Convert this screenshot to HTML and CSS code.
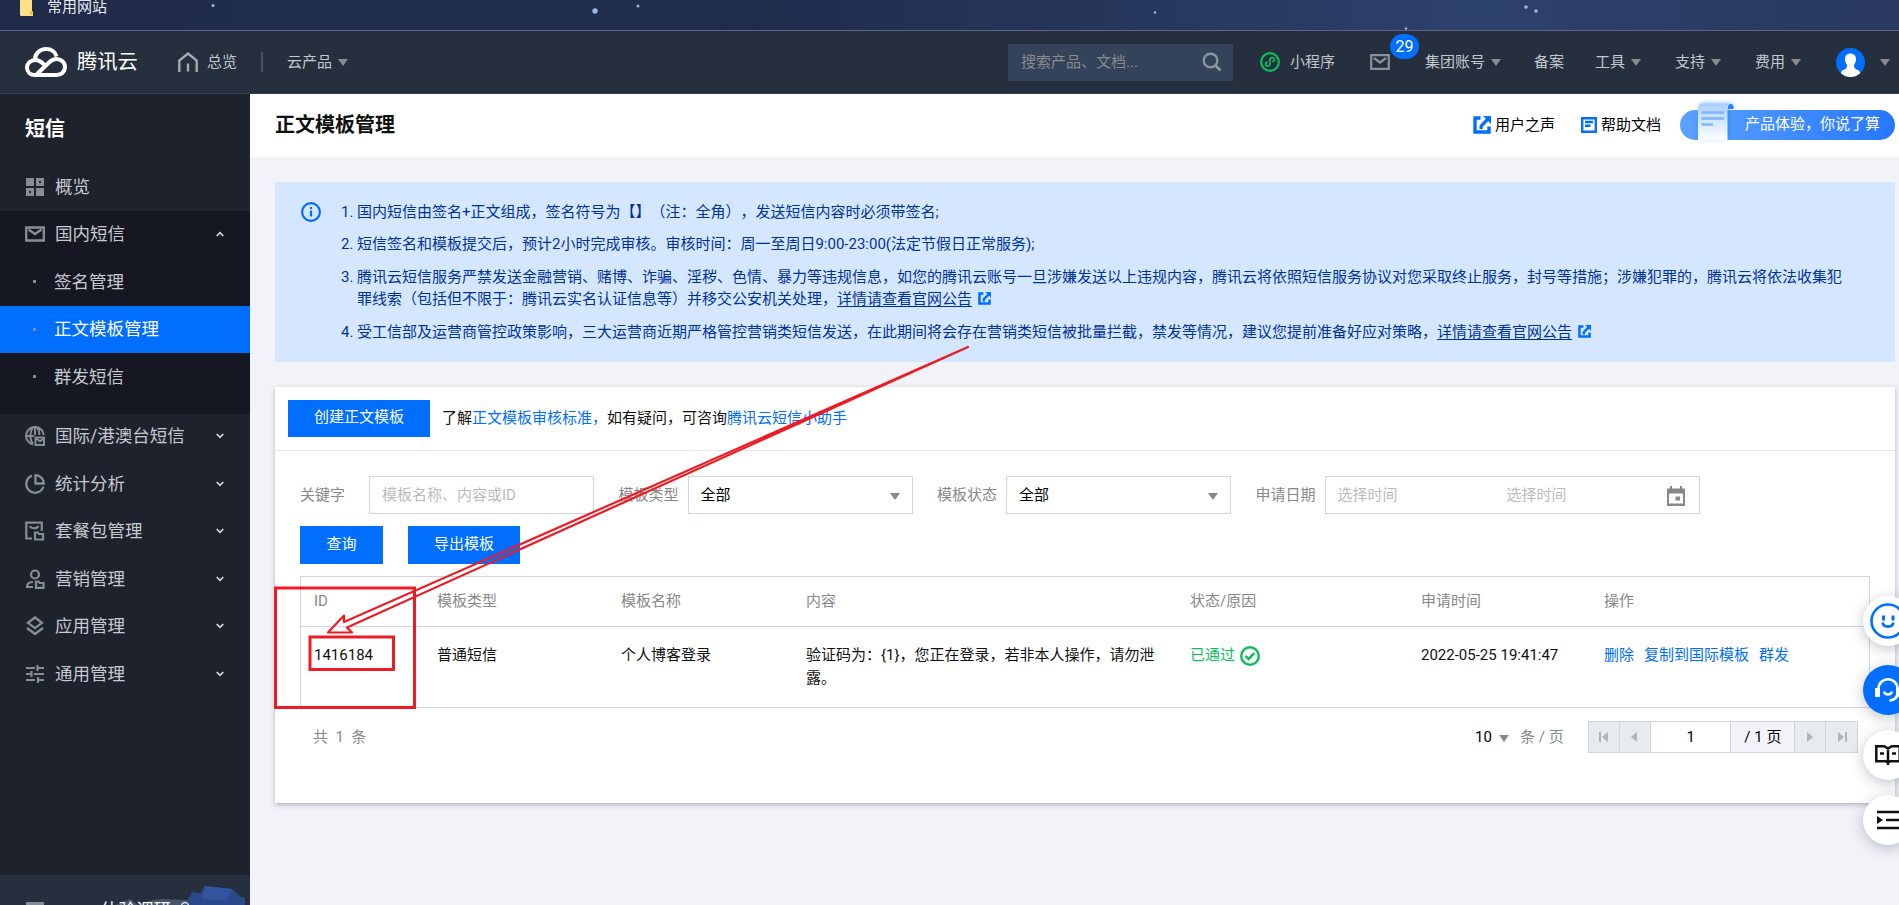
FILE: index.html
```html
<!DOCTYPE html>
<html lang="zh-CN">
<head>
<meta charset="utf-8">
<title>正文模板管理</title>
<link rel="stylesheet" href="styles.css">
</head>
<body>
<svg width="0" height="0" class="defs">
  <symbol id="share" viewBox="0 0 18 18"><path d="M7.500 2H2v14h14v-5.500" fill="none" stroke="currentColor" stroke-width="3.400"/><path d="M10 0h8v8l-2.800-2.800-5.500 5.500v2.300H6.500v-3.500l6.300-6.700z" fill="currentColor"/></symbol>
  <symbol id="down" viewBox="0 0 8 6"><path d="M.7 1 4 4.300 7.300 1" fill="none" stroke="#d5d8dc" stroke-width="1.700"/></symbol>
</svg>
<div class="bookmarks">
  <svg class="folder" width="14" height="18" viewBox="0 0 14 18"><path d="M0 0h12v12l1 1v4H1L0 16z" fill="#ffe08a"/><path d="M10 16v-4h2.500v4z" fill="#f0c33c"/></svg>
  <span>常用网站</span>
  <svg class="stars" width="1899" height="30"><g fill="#9db6e6"><circle cx="213" cy="5.500" r="1.500"/><circle cx="595" cy="11" r="2.700"/><circle cx="638" cy="6" r="1.500"/><circle cx="1155" cy="12.500" r="1.200"/><circle cx="1526" cy="7" r="1.800"/><circle cx="1536" cy="11" r="1.800"/><circle cx="1406" cy="28.500" r="1.300"/></g></svg>
</div>
<header class="top">
  <svg class="logo" width="42" height="30" viewBox="0 0 42 30"><g fill="none" stroke="#fff" stroke-width="4"><path d="M10 12.500C10 6.500 15 2 21 2c5.500 0 9.500 3 10.500 7.500"/><path d="M19 17.500c-3-3-5.500-4.500-8.500-4.500C5.500 13 2 16.500 2 20.500 2 25 5.500 28 10 28h21.500c5 0 8.500-3.500 8.500-8s-4-8-8.500-8c-3 0-5 1-7.500 3.500L12 27"/></g></svg>
  <span class="brand">腾讯云</span>
  <svg class="home" width="20" height="20" viewBox="0 0 20 20"><path d="M5.500 18.800H1.300V8.500L10 1.500l8.700 7v10.300h-4M10 11.500v8" fill="none" stroke="#a8adb5" stroke-width="2.300"/><path d="M2.500 17.500h5v2.500h-5zM12.500 17.500h5v2.500h-5z" fill="#262f3e"/></svg>
  <span class="nav n-home">总览</span><i class="bar"></i>
  <span class="nav n-prod">云产品</span><i class="tri"></i>
  <div class="search"><span>搜索产品、文档...</span><svg width="20" height="20" viewBox="0 0 20 20"><circle cx="8.500" cy="8.500" r="6.800" fill="none" stroke="#8b939e" stroke-width="2.400"/><path d="m13.500 13.500 5 5" stroke="#8b939e" stroke-width="2.800"/></svg></div>
  <svg class="mini" width="20" height="20" viewBox="0 0 20 20"><circle cx="10" cy="10" r="8.800" fill="none" stroke="#0abf5b" stroke-width="2.200"/><path d="M7.800 10.200c-3 .5-3 4-.3 4 3.700 0 2.500-3.500 2.500-4.500s-1-4 2.500-4c2.700 0 2.700 3.500-.3 4" fill="none" stroke="#0abf5b" stroke-width="1.700"/></svg>
  <span class="nav n-mini">小程序</span>
  <div class="mail"><svg width="20" height="16" viewBox="0 0 20 16"><path d="M1.200 1.200h17.600v13.600H1.200zM4 4l6 4.500L16 4" fill="none" stroke="#8a9299" stroke-width="2.200"/></svg><b class="badge">29</b></div>
  <span class="nav n-group">集团账号</span><i class="tri"></i>
  <span class="nav n-rec">备案</span>
  <span class="nav n-tool">工具</span><i class="tri"></i>
  <span class="nav n-sup">支持</span><i class="tri"></i>
  <span class="nav n-fee">费用</span><i class="tri"></i>
  <svg class="avatar" width="29" height="29" viewBox="0 0 29 29"><defs><clipPath id="av"><circle cx="14.500" cy="14.500" r="14.500"/></clipPath></defs><g clip-path="url(#av)"><path d="M0 0h29v29H0z" fill="#006eff"/><path d="M14.500 5.500c3.500 0 5.500 2.300 5.500 5.500 0 3-1 4.500-2 6 0 3 1 4 5 5.500l3 7H3l3-7c4-1.500 5-2.500 5-5.500-1-1.500-2-3-2-6 0-3.200 2-5.500 5.500-5.500z" fill="#fff"/></g></svg>
  <i class="tri t-last"></i>
</header>
<div class="shell">
  <aside>
    <h2>短信</h2>
    <a class="item"><svg width="20" height="20" viewBox="0 0 20 20"><path d="M1 1h8v8H1zM11 11h8v8h-8z" fill="#858e96"/><path d="M12.500 2.500h5v5h-5zM2.500 12.500h5v5h-5z" fill="none" stroke="#858e96" stroke-width="3"/></svg><span>概览</span></a>
    <div class="open">
      <a class="item"><svg width="20" height="20" viewBox="0 0 20 20"><path d="M1.200 3.500h17.600v13H1.200zM3.500 5.500 10 10l6.500-4.500" fill="none" stroke="#858e96" stroke-width="2.300"/></svg><span>国内短信</span><svg class="chev up" width="8" height="6"><use href="#down"/></svg></a>
      <a class="item sub"><i></i><span>签名管理</span></a>
      <a class="item sub active"><i></i><span>正文模板管理</span></a>
      <a class="item sub"><i></i><span>群发短信</span></a>
    </div>
    <a class="item"><svg width="20" height="20" viewBox="0 0 20 20"><g fill="none" stroke="#858e96" stroke-width="2"><path d="M8 18.500A8.900 8.900 0 1 1 18.800 9M8 18C4.500 14 4.500 6 8 1.500M12 1.500C14 4 14.500 6 14.500 9M10 1v8M1 10h8"/><path d="M10.500 11.500h8.500v7.500h-8.500zM12 13l3 2.200 3-2.200"/></g></svg><span>国际/港澳台短信</span><svg class="chev" width="8" height="6"><use href="#down"/></svg></a>
    <a class="item"><svg width="20" height="20" viewBox="0 0 20 20"><path d="M7 1.700A8.800 8.800 0 1 0 18.500 12.500M10.500 1.200V9.500h8.300a8.500 8.500 0 0 0-8.300-8.300z" fill="none" stroke="#858e96" stroke-width="2.300"/></svg><span>统计分析</span><svg class="chev" width="8" height="6"><use href="#down"/></svg></a>
    <a class="item"><svg width="20" height="20" viewBox="0 0 20 20"><path d="M7 17.500H1.300V1.700h15.500V10M5 5c1 3 7 3 8.500 0M10 11.500h3l1 1.500h4v5.500h-8z" fill="none" stroke="#858e96" stroke-width="2.200"/></svg><span>套餐包管理</span><svg class="chev" width="8" height="6"><use href="#down"/></svg></a>
    <a class="item"><svg width="20" height="20" viewBox="0 0 20 20"><path d="M10 1.500a4 4 0 1 1 0 8 4 4 0 0 1 0-8zM8 18H2c0-3.500 2-5 6-5M11 12.500h2.500l1 1.500h4v4.800H11z" fill="none" stroke="#858e96" stroke-width="2.200"/></svg><span>营销管理</span><svg class="chev" width="8" height="6"><use href="#down"/></svg></a>
    <a class="item"><svg width="20" height="20" viewBox="0 0 20 20"><path d="m10 1.500 7 5.300-7 5.300-7-5.300zM2 12l8 6 8-6" fill="none" stroke="#858e96" stroke-width="2.300"/></svg><span>应用管理</span><svg class="chev" width="8" height="6"><use href="#down"/></svg></a>
    <a class="item"><svg width="20" height="20" viewBox="0 0 20 20"><path d="M1 4h9M12.500 4H19M12.500 1v6M1 10h5M6.500 7v6M9 10h10M1 16h9M12.500 16H19M13 13v6" fill="none" stroke="#858e96" stroke-width="2.200"/></svg><span>通用管理</span><svg class="chev" width="8" height="6"><use href="#down"/></svg></a>
    <div class="survey">
      <i></i><span>体验调研</span>
      <svg width="130" height="30" viewBox="0 0 130 30"><path d="M38 25 48 24 130 28v2H0l15-6 8 6z" fill="#45536b"/><path d="m70 30 7-13 9 1 4-7 27 3 9 8 11 1-5 7z" fill="#29498a"/><path d="m90 11 27 3-5 12-25-2z" fill="#31549d"/><circle cx="70" cy="31" r="3.500" fill="none" stroke="#d5d8dc" stroke-width="1.500"/></svg>
    </div>
  </aside>
  <main>
    <div class="head">
      <h1>正文模板管理</h1>
      <svg class="hi h-share" width="18" height="18"><use href="#share"/></svg><span class="hlink">用户之声</span>
      <svg class="hi h-doc" width="16" height="16" viewBox="0 0 16 16"><path d="M1.200 1.200h13.600v13.600H1.200zM4 5h8M4 8.700h5.500" fill="none" stroke="#006eff" stroke-width="2.400"/></svg><span class="hlink">帮助文档</span>
      <div class="promo"><svg width="40" height="37" viewBox="0 0 40 37"><defs><linearGradient id="pg" x2="0" y2="1"><stop stop-color="#a9d0ff"/><stop offset="1" stop-color="#fff"/></linearGradient></defs><path d="M31 4c0-4 5.500-4 5.500 0v2H31z" fill="#277fff"/><path d="M1 37V6c0-4 2-5.500 5-5.500h28c-2.500.5-3.500 2-3.500 5V37z" fill="url(#pg)"/><path d="M4.500 9.500h22.500M4.500 15.500h22.500M4.500 21.500H16" stroke="#7fb4ff" stroke-width="2.600"/></svg><span>产品体验，你说了算</span></div>
    </div>
    <section class="notice">
      <svg width="20" height="20" viewBox="0 0 20 20"><circle cx="10" cy="10" r="8.900" fill="none" stroke="#006eff" stroke-width="2.200"/><path d="M10 8.500v6M10 5v2" stroke="#006eff" stroke-width="2.200"/></svg>
      <div class="rules">
        <div><em>1.</em><p>国内短信由签名+正文组成，签名符号为【】（注：全角），发送短信内容时必须带签名;</p></div>
        <div><em>2.</em><p>短信签名和模板提交后，预计2小时完成审核。审核时间：周一至周日9:00-23:00(法定节假日正常服务);</p></div>
        <div><em>3.</em><p>腾讯云短信服务严禁发送金融营销、赌博、诈骗、淫秽、色情、暴力等违规信息，如您的腾讯云账号一旦涉嫌发送以上违规内容，腾讯云将依照短信服务协议对您采取终止服务，封号等措施；涉嫌犯罪的，腾讯云将依法收集犯<br>罪线索（包括但不限于：腾讯云实名认证信息等）并移交公安机关处理，<u>详情请查看官网公告</u><svg class="ext" width="13" height="13"><use href="#share"/></svg></p></div>
        <div><em>4.</em><p>受工信部及运营商管控政策影响，三大运营商近期严格管控营销类短信发送，在此期间将会存在营销类短信被批量拦截，禁发等情况，建议您提前准备好应对策略，<u>详情请查看官网公告</u><svg class="ext" width="13" height="13"><use href="#share"/></svg></p></div>
      </div>
    </section>
    <section class="card">
      <div class="intro"><button class="b-create">创建正文模板</button><p>了解<a>正文模板审核标准，</a>如有疑问，可咨询<a>腾讯云短信小助手</a></p></div>
      <div class="filters">
        <label class="l1">关键字</label><div class="field hint">模板名称、内容或ID</div>
        <label>模板类型</label><div class="field">全部<i class="caret"></i></div>
        <label>模板状态</label><div class="field">全部<i class="caret"></i></div>
        <label>申请日期</label><div class="field date hint"><span>选择时间</span><span>选择时间</span><svg width="18" height="20" viewBox="0 0 18 20"><path d="M0 2.500h3V0h2v2.500h8V0h2v2.500h3V20H0zm2 5V17.500h14V7.500z" fill="#888" fill-rule="evenodd"/><path d="M8.500 10.500h4.500v4H8.500z" fill="#888"/></svg></div>
      </div>
      <div class="actions"><button class="b-query">查询</button><button class="b-export">导出模板</button></div>
      <div class="table">
        <div class="row th"><span>ID</span><span>模板类型</span><span>模板名称</span><span>内容</span><span>状态/原因</span><span>申请时间</span><span>操作</span></div>
        <div class="row td"><span>1416184</span><span>普通短信</span><span>个人博客登录</span><span>验证码为：{1}，您正在登录，若非本人操作，请勿泄<br>露。</span><span class="ok">已通过<svg width="20" height="20" viewBox="0 0 20 20"><circle cx="10" cy="10" r="8.800" fill="none" stroke="#0abf5b" stroke-width="2.400"/><path d="m5.500 9.800 3.200 3.200 5.500-5.800" fill="none" stroke="#0abf5b" stroke-width="2.400"/></svg></span><span>2022-05-25 19:41:47</span><span class="ops"><a>删除</a><a>复制到国际模板</a><a>群发</a></span></div>
      </div>
      <div class="paging">
        <span class="total">共&nbsp; 1 &nbsp;条</span>
        <span class="size">10</span><i class="caret"></i><span class="per">条 / 页</span>
        <div class="pager">
          <i><svg width="10" height="10"><path d="M0 0h2v10H0zM9 0v10L3 5z" fill="#b0b4bb"/></svg></i><i><svg width="10" height="10"><path d="M7 0v10L1 5z" fill="#b0b4bb"/></svg></i><b>1</b><b class="of">/ 1 页</b><i><svg width="10" height="10"><path d="M2 0v10l6-5z" fill="#b0b4bb"/></svg></i><i><svg width="10" height="10"><path d="M8 0h2v10H8zM1 0v10l6-5z" fill="#b0b4bb"/></svg></i>
        </div>
      </div>
    </section>
  </main>
</div>
<div class="floats">
  <div><svg width="36" height="36" viewBox="0 0 36 36"><circle cx="18" cy="18" r="16.500" fill="none" stroke="#006eff" stroke-width="2.600"/><path d="M13.500 12.500v5M23 12.500v5" stroke="#006eff" stroke-width="3"/><path d="M12.500 19.500c1 5.500 10 5.500 11 0" fill="none" stroke="#006eff" stroke-width="2.600"/></svg></div>
  <div class="blue"><svg width="26" height="26" viewBox="0 0 26 26"><path d="M3.500 16v-4c0-13 19-13 19 0v4c0 5-3 7-8 7.500" fill="none" stroke="#fff" stroke-width="2.600"/><path d="M0 11h5v9H0zM21 11h5v9h-5z" fill="#fff"/><path d="M9 14.500c1 4 7 4 8 0" fill="none" stroke="#fff" stroke-width="2.300"/></svg></div>
  <div><svg width="26" height="22" viewBox="0 0 26 22"><path d="M1.300 2.300h8L13 4.500l3.700-2.200h8v15h-10L13 19l-1.700-1.700h-10zM13 4v17M5 9.500h4M17 9.500h4" fill="none" stroke="#111" stroke-width="2.500"/></svg></div>
  <div><svg width="22" height="20" viewBox="0 0 22 20"><path d="M0 2h22M9 10h13M0 18h22" stroke="#111" stroke-width="2.500"/><path d="m0 6 6 4-6 4z" fill="#111"/></svg></div>
</div>
<svg class="marks" width="1899" height="905" viewBox="0 0 1899 905"><g fill="none" stroke="#ed1c24"><path d="M275.500 588H414.500V707.500H275.500zM310 637H393.500V669.500H310z" stroke-width="3"/><path d="M968 347 344 622V615.500L328 632.500H352L347 627.500z" stroke-width="2.200" stroke-linejoin="round"/></g></svg>
</body>
</html>
```

FILE: styles.css
```css
* { box-sizing: border-box; }
body { margin: 0; width: 1899px; height: 905px; overflow: hidden; position: relative; background: #f2f3f8; color: #111; font: 15px/22.5px Roboto, "Noto Sans CJK SC", sans-serif; text-spacing-trim: space-all; }
h1, h2, p { margin: 0; }
i, em { font-style: normal; }
svg { display: block; flex: none; }
.defs { position: absolute; }
.bookmarks { position: relative; height: 31px; display: flex; padding-left: 20px; border-bottom: 1px solid #625f8c; background: linear-gradient(90deg, #1f2b49, #202c4c 40%, #2c416c 78%, #29395f); color: #e8ebf2; overflow: hidden; }
.bookmarks span { height: 16px; margin: 0 0 0 13px; line-height: 15px; }
.folder { margin-top: -1px; }
.stars { position: absolute; left: 0; top: 0; }

.top { height: 63px; background: #262f3e; border-bottom: 1px solid #2f3e58; display: flex; align-items: center; color: #c3c7cd; white-space: nowrap; }
.logo { margin-left: 25px; }
.brand { width: 61px; margin-left: 10px; color: #fff; font-size: 20.3px; }
.home { margin-left: 40px; }
.n-home { width: 30px; margin-left: 9px; }
.bar { width: 2px; height: 20px; margin-left: 24px; background: #4b5463; }
.n-prod { width: 45px; margin-left: 24px; }
.tri { width: 0; height: 0; margin: 1px 0 0 6px; border: 5px solid transparent; border-top: 7px solid #878b91; border-bottom: 0; }
.search { width: 225px; height: 37px; margin-left: 660px; padding: 0 11px 0 13px; background: #34425a; display: flex; align-items: center; justify-content: space-between; color: #888c92; }
.mini { margin-left: 27px; }
.n-mini { width: 45px; margin-left: 10px; }
.mail { position: relative; margin-left: 35px; }
.badge { position: absolute; left: 20px; top: -20px; width: 29px; height: 25px; border-radius: 13px; background: #006eff; color: #fff; font: 16px/25px Roboto, sans-serif; text-align: center; }
.n-group { width: 60px; margin-left: 35px; }
.n-rec { margin-left: 33px; }
.n-tool { margin-left: 31px; }
.n-sup, .n-fee { margin-left: 34px; }
.avatar { margin-left: 35px; }
.t-last { margin-left: 15px; }

.shell { display: flex; height: 811px; }
aside { width: 250px; background: #1e222d; display: flex; flex-direction: column; color: #c6c9cd; }
h2 { color: #fff; font-size: 20px; line-height: 30px; padding: 20px 0 19px 25px; }
.item { height: 47.5px; display: flex; align-items: center; padding-left: 25px; font-size: 17.5px; flex: none; }
.item span { margin-left: 10px; }
.chev { margin: 0 26px 0 auto; }
.up { transform: rotate(180deg); }
.open { background: #151822; height: 203px; margin-bottom: -1px; flex: none; }
.sub i { width: 3px; height: 3px; margin: 0 10px 0 8px; background: #858e96; }
.sub span { margin-left: 8px; }
.active { background: #006eff; color: #fff; }
.survey { position: relative; height: 30px; margin-top: auto; background: #262f3e; overflow: hidden; flex: none; display: flex; color: #fff; font-size: 17.5px; }
.survey i { width: 18px; height: 20px; margin: 27px 0 0 26px; background: #858e96; }
.survey span { margin: 24px 0 0 57px; position: relative; z-index: 1; }
.survey svg { position: absolute; right: 5px; top: 0; }

main { flex: 1; min-width: 0; }
.head { height: 63px; padding-left: 25px; background: #fff; display: flex; align-items: center; white-space: nowrap; }
h1 { width: 120px; font-size: 20px; line-height: 30px; margin-top: -2px; }
.hlink { color: #000; width: 60px; margin-top: -1px; }
.hi { color: #006eff; margin-top: -2px; margin-right: 4px; }
.h-share { margin-left: 1078px; }
.h-doc { margin-left: 26px; }
.promo { position: relative; width: 215px; height: 30px; margin: -1px 0 0 19px; padding-left: 65px; border-radius: 15px; background: linear-gradient(90deg, #5ba1ff, #2678ff); color: #fff; line-height: 29px; }
.promo svg { position: absolute; left: 17px; top: -7px; filter: drop-shadow(1px -1px 2px rgba(0, 110, 255, .35)); }

.notice { width: 1620px; height: 180px; margin: 25px 0 0 25px; padding: 18.5px 0 0 26px; background: #d5e7ff; display: flex; color: #003399; white-space: nowrap; }
.notice > svg { margin-top: 1px; }
.rules { margin-left: 20px; }
.rules > div { display: flex; margin-bottom: 10px; }
.rules em { width: 16px; }
.ext { display: inline-block; margin-left: 6px; vertical-align: -1px; color: #006eff; }
u { text-underline-offset: 2px; }

.card { width: 1620px; height: 416px; margin: 25px 0 0 25px; background: #fff; box-shadow: 0 2px 5px rgba(54, 58, 80, .32); }
.intro { height: 64px; padding: 13px 0 0 13px; border-bottom: 1px solid #e5e8ed; display: flex; }
.intro p { margin: 7px 0 0 12px; }
.card a { color: #006eff; }
button { border: 0; padding: 0 0 1px; background: #006eff; color: #fff; font: inherit; height: 38px; }
.b-create { width: 142px; height: 37px; padding: 0 0 2px; }
.filters { display: flex; padding: 25px 0 0 25px; align-items: center; color: #888; white-space: nowrap; }
label { width: 60px; margin: 0 9px 0 24.5px; }
.l1 { width: 45px; margin: 0 24px 0 0; }
.field { width: 225px; height: 38px; border: 1px solid #cfd5de; padding: 0 12px; line-height: 34px; color: #000; display: flex; align-items: center; }
.hint { color: #bbb; line-height: 36px; padding-left: 12px; }
.caret { width: 0; height: 0; margin: 2px 0 0 auto; border: 5px solid transparent; border-top: 7px solid #888; border-bottom: 0; }
.date { width: 375px; padding-right: 14px; }
.date span { width: 169px; }
.date svg { margin: 1px 0 0 auto; }
.date span + span { width: 60px; }
.actions { display: flex; gap: 25px; padding: 12px 0 12px 25px; }
.b-query { width: 83px; }
.b-export { width: 112px; }
.table { width: 1570px; margin-left: 25px; border: 1px solid #cfd5de; white-space: nowrap; }
.row { display: grid; grid-template-columns: 123px 184px 185px 384px 231px 183px 1fr; padding-left: 13px; }
.th { height: 50px; line-height: 49px; color: #888; border-bottom: 1px solid #cfd5de; }
.td { height: 80px; padding-top: 17px; }
.ok { color: #0abf5b; display: flex; gap: 5px; }
.ok svg { margin-top: 2px; }
.ops a { margin-right: 10px; }
.paging { display: flex; align-items: center; height: 32px; margin: 13px 37px 0 38px; color: #888; white-space: nowrap; }
.total { width: 1162px; }
.size { width: 17px; color: #000; }
.paging .caret { margin: 2px 0 0 7px; }
.per { width: 46px; margin: 0 22px 0 11px; }
.pager { display: flex; width: 270px; height: 32px; border: 1px solid #cfd5de; background: #e7eaef; color: #000; line-height: 30px; }
.pager > * { width: 31px; border-right: 1px solid #cfd5de; display: flex; align-items: center; justify-content: center; }
.pager > :last-child { border: 0; }
.pager b { width: 81px; font-weight: 400; background: #fff; }
.pager .of { width: 64px; background: #f2f3f8; }

.floats { position: absolute; left: 1863px; top: 596px; }
.floats > div { width: 50px; height: 50px; margin-bottom: 15px; border-radius: 50%; background: #fff; box-shadow: 0 3px 14px rgba(54, 58, 80, .3); display: flex; align-items: center; justify-content: center; }
.floats > :first-child { margin-bottom: 19px; }
.floats > .blue { background: #006eff; }
.marks { position: absolute; left: 0; top: 0; pointer-events: none; }
```
